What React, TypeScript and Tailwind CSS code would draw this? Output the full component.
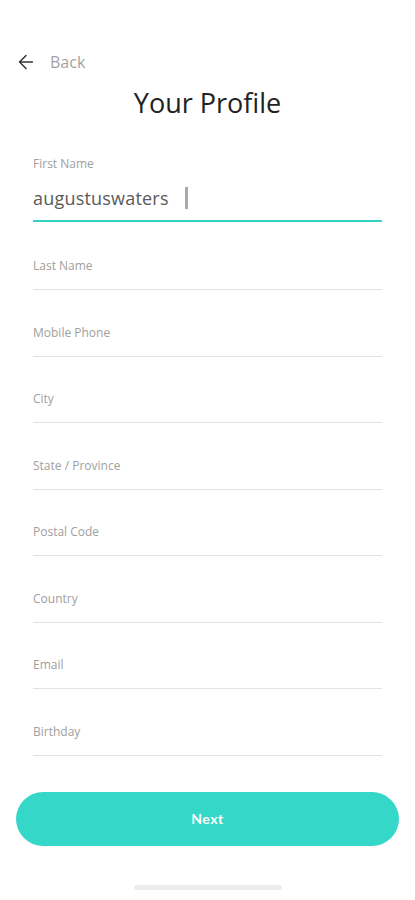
import { ArrowLeft } from 'lucide-react';

const fields = ['Last Name', 'Mobile Phone', 'City', 'State / Province', 'Postal Code', 'Country', 'Email', 'Birthday'];

export default function App() {
    return (
        <div
            className="w-[415px] h-[900px] bg-white flex flex-col relative overflow-hidden"
            style={{ fontFamily: '"Open Sans", "Noto Sans", sans-serif' }}
        >
            {/* Header */}
            <div className="flex items-center pl-[15px] mt-[50px] h-[24px]">
                <ArrowLeft className="w-[22px] h-[22px] text-[#333]" strokeWidth={1.6} />
                <span className="ml-[13px] text-[16px] text-[#a3a3a3]">Back</span>
            </div>
            <h1 className="mt-[12px] text-center text-[27px] leading-[34px] text-[#222]">Your Profile</h1>

            {/* Form */}
            <div className="px-[33px] mt-[36px] flex flex-col">
                <div className="flex flex-col">
                    <label className="text-[12px] leading-[16px] text-[#a0a0a0]">First Name</label>
                    <div className="flex items-center h-[50px] border-b-2 border-[#2fd4c4] pt-[4px]">
                        <span className="text-[18px] text-[#5a5a5a] tracking-[0.2px]">augustuswaters</span>
                        <span className="ml-[16px] w-[3px] h-[22px] bg-[#aaa]"></span>
                    </div>
                </div>
                {fields.map((f, i) => (
                    <div key={f} className={`flex flex-col ${i === 0 ? 'mt-[36px]' : 'mt-[34.5px]'}`}>
                        <label className="text-[12px] leading-[16px] text-[#a0a0a0]">{f}</label>
                        <div className="h-[16px] border-b border-[#e2e2e2]"></div>
                    </div>
                ))}
            </div>

            {/* Button */}
            <div className="px-[16px] mt-[36px]">
                <button className="w-full h-[54px] rounded-full bg-[#35d8c8] text-white text-[14px] font-bold tracking-[0.5px]" style={{ fontFamily: 'Lato, sans-serif' }}>
                    Next
                </button>
            </div>

            <div className="mx-auto mt-[39px] w-[148px] h-[5px] rounded-full bg-[#ececec]"></div>
        </div>
    );
}
